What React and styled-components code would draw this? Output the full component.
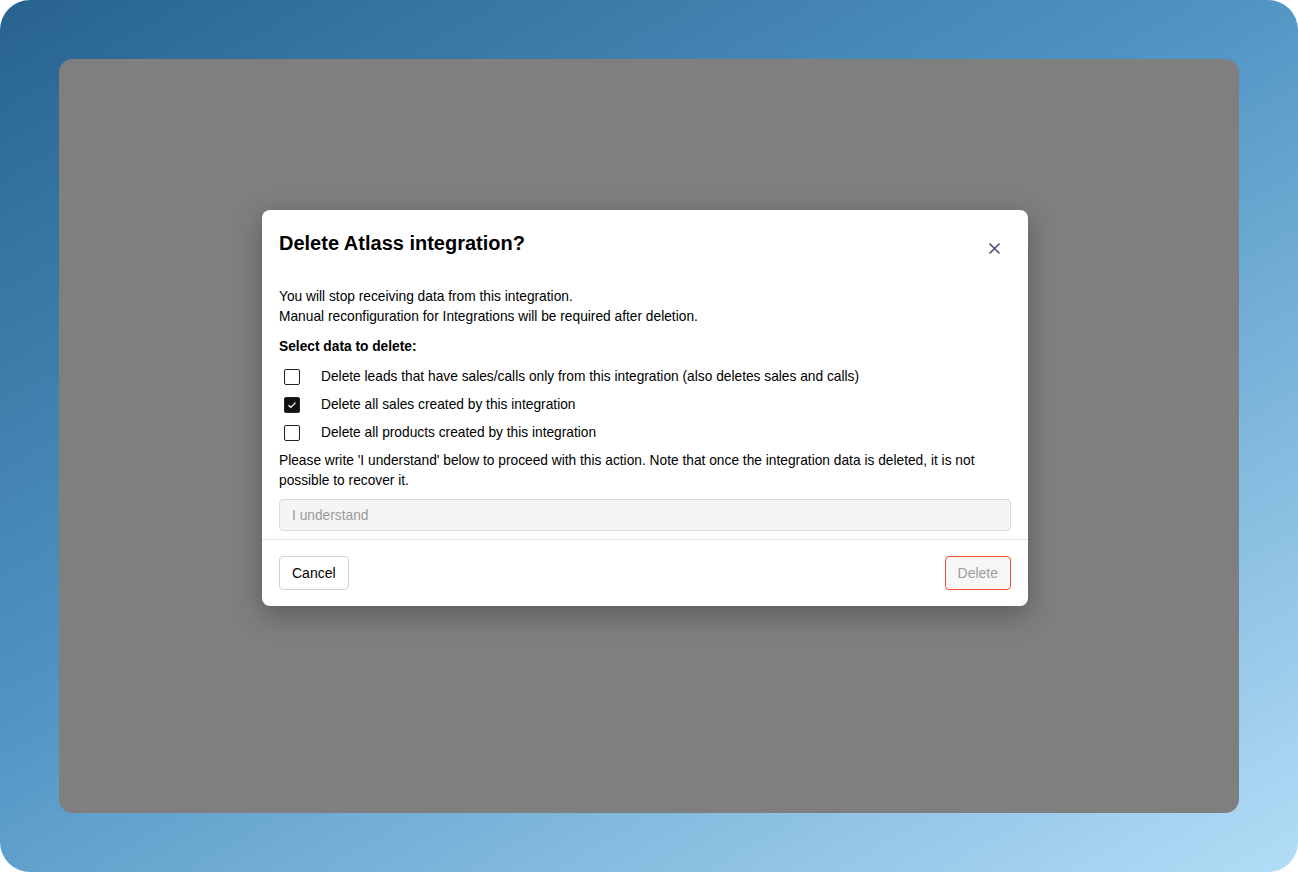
import styled, { createGlobalStyle } from "styled-components";

const GlobalStyle = createGlobalStyle`
  html, body {
    margin: 0;
    padding: 0;
    background: #ffffff;
  }
  body {
    font-family: "Liberation Sans", Arial, sans-serif;
  }
  * {
    box-sizing: border-box;
  }
`;

const Frame = styled.div`
  width: 1298px;
  height: 872px;
  border-radius: 30px;
  background: linear-gradient(150deg, #28638f 0%, #5195c4 45%, #b3ddf7 100%);
  padding: 59px;
  display: flex;
`;

const Backdrop = styled.div`
  flex: 1;
  background: #7f7f7f;
  border-radius: 14px;
  display: flex;
  justify-content: flex-start;
  padding: 151px 0 0 203px;
`;

const Modal = styled.div`
  width: 766px;
  height: 396px;
  background: #ffffff;
  border-radius: 8px;
  box-shadow: 0 8px 28px rgba(0, 0, 0, 0.3);
  display: flex;
  flex-direction: column;
  color: #000;
`;

const Header = styled.div`
  display: flex;
  justify-content: space-between;
  align-items: flex-start;
  padding: 21px 17px 0 17px;
  height: 77px;
`;

const Title = styled.h2`
  margin: 0;
  font-size: 20px;
  line-height: 24px;
  font-weight: 700;
`;

const CloseButton = styled.button`
  border: none;
  background: none;
  padding: 0;
  margin: 12px 11px 0 0;
  width: 11px;
  height: 11px;
  display: flex;
  cursor: pointer;
`;

const Body = styled.div`
  padding: 0 17px;
  display: flex;
  flex-direction: column;
  font-size: 13.75px;
  line-height: 20px;
`;

const Text = styled.p`
  margin: 0;
`;

const Label = styled.div`
  font-weight: 700;
  margin-top: 10px;
`;

const Options = styled.div`
  display: flex;
  flex-direction: column;
  gap: 8px;
  margin-top: 10px;
  margin-bottom: 8px;
`;

const Option = styled.label`
  display: flex;
  align-items: center;
  gap: 21px;
  padding-left: 5px;
`;

const Box = styled.span`
  width: 16px;
  height: 16px;
  border-radius: 2px;
  border: 1.5px solid #222;
  background: ${(p) => (p.$checked ? "#111" : "#fff")};
  display: flex;
  align-items: center;
  justify-content: center;
  flex-shrink: 0;
`;

const Input = styled.input`
  margin-top: 8px;
  height: 32px;
  width: 100%;
  border: 1px solid #d9d9d9;
  border-radius: 4px;
  background: #f5f5f5;
  padding: 0 12px;
  font-family: inherit;
  font-size: 13.75px;
  &::placeholder {
    color: #9a9a9a;
  }
`;

const Divider = styled.div`
  height: 1px;
  background: #e4e4e4;
  margin-top: 8px;
`;

const Footer = styled.div`
  display: flex;
  justify-content: space-between;
  padding: 16px 17px;
`;

const Button = styled.button`
  height: 34px;
  padding: 0 12px;
  border-radius: 4px;
  font-family: inherit;
  font-size: 14px;
  border: 1px solid ${(p) => (p.$danger ? "#f0512f" : "#d2d2d2")};
  background: ${(p) => (p.$danger ? "#f7f7f7" : "#fff")};
  color: ${(p) => (p.$danger ? "#9d9d9d" : "#000")};
`;

const options = [
  { text: "Delete leads that have sales/calls only from this integration (also deletes sales and calls)", checked: false },
  { text: "Delete all sales created by this integration", checked: true },
  { text: "Delete all products created by this integration", checked: false },
];

export default function App() {
  return (
    <>
      <GlobalStyle />
      <Frame>
        <Backdrop>
          <Modal>
            <Header>
              <Title>Delete Atlass integration?</Title>
              <CloseButton aria-label="Close">
                <svg width="11" height="11" viewBox="0 0 11 11">
                  <path d="M1 1L10 10M10 1L1 10" stroke="#4d5270" strokeWidth="1.7" strokeLinecap="round" />
                </svg>
              </CloseButton>
            </Header>
            <Body>
              <Text>You will stop receiving data from this integration.</Text>
              <Text>Manual reconfiguration for Integrations will be required after deletion.</Text>
              <Label>Select data to delete:</Label>
              <Options>
                {options.map((o) => (
                  <Option key={o.text}>
                    <Box $checked={o.checked}>
                      {o.checked && (
                        <svg width="10" height="8" viewBox="0 0 10 8">
                          <path d="M1.5 4.2L3.8 6.4L8.5 1.6" stroke="#fff" strokeWidth="1.3" fill="none" />
                        </svg>
                      )}
                    </Box>
                    {o.text}
                  </Option>
                ))}
              </Options>
              <Text>
                Please write 'I understand' below to proceed with this action. Note that once the integration data is deleted, it is not possible to recover it.
              </Text>
              <Input placeholder="I understand" />
            </Body>
            <Divider />
            <Footer>
              <Button>Cancel</Button>
              <Button $danger>Delete</Button>
            </Footer>
          </Modal>
        </Backdrop>
      </Frame>
    </>
  );
}
